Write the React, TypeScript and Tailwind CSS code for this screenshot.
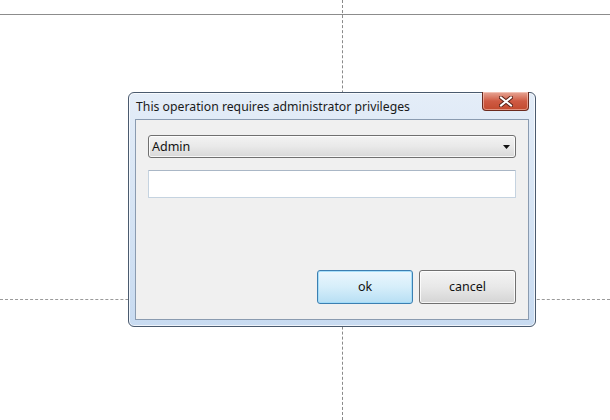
import React from "react";

export default function App() {
  const font = { fontFamily: '"Noto Sans", "Open Sans", sans-serif' };
  return (
    <div className="relative w-[610px] h-[420px] bg-white overflow-hidden" style={font}>
      {/* canvas guide lines */}
      <div className="absolute left-0 top-[14px] w-[610px] h-0 border-t border-[#8c8c8c]" />
      <div className="absolute left-[342px] top-0 w-0 h-[420px] border-l border-dashed border-[#8a8a8a]" />
      <div className="absolute left-0 top-[299px] w-[610px] h-0 border-t border-dashed border-[#9a9a9a]" />

      {/* window */}
      <div className="absolute left-[128px] top-[92px] w-[408px] h-[235px] rounded-[6px] border border-[#4a5a6e] bg-gradient-to-b from-[#e4edf8] via-[#d6e4f4] to-[#c8dbf1] flex flex-col px-[6px] pb-[6px] shadow-[inset_0_0_0_1px_rgba(255,255,255,0.7)]">
        <div className="h-[26px] flex items-start justify-between">
          <div className="pt-[5px] pl-[1px] text-[12.25px] leading-[17px] text-[#1a1a1a]">
            This operation requires administrator privileges
          </div>
          <div className="mt-[-1px] w-[47px] h-[19px] rounded-b-[4px] border border-[#6b2a1e] border-t-0 bg-gradient-to-b from-[#e6a696] via-[#cf5a43] to-[#c24a2e] flex items-center justify-center shadow-[inset_0_0_0_1px_rgba(255,220,210,0.5)]">
            <svg width="14" height="11" viewBox="0 0 14 11">
              <path d="M2 1.5 L12 9.5 M12 1.5 L2 9.5" stroke="#5a2218" strokeWidth="4" strokeLinecap="square" />
              <path d="M2 1.5 L12 9.5 M12 1.5 L2 9.5" stroke="#ffffff" strokeWidth="2" strokeLinecap="square" />
            </svg>
          </div>
        </div>
        <div className="flex-1 border border-[#8a9bb0] bg-[#f0f0f0] flex flex-col pt-[15px] pl-[12px] pr-[12px]">
          <div className="h-[23px] w-[368px] rounded-[3px] border border-[#707070] bg-gradient-to-b from-[#f3f3f3] via-[#e9e9e9] to-[#d8d8d8] flex items-center justify-between pl-[3px] pr-[5px] shadow-[inset_0_0_0_1px_rgba(255,255,255,0.8)]">
            <span className="text-[12.5px] text-[#111] leading-none pt-[1px]">Admin</span>
            <svg width="7" height="4" viewBox="0 0 7 4">
              <path d="M0 0 H7 L3.5 4 Z" fill="#111" />
            </svg>
          </div>
          <div className="mt-[12px] h-[28px] w-[368px] bg-white border border-[#c5d3e0] border-t-[#aab7c6] rounded-[1px]" />
          <div className="flex-1" />
          <div className="flex justify-end gap-[6px] pb-[15px]">
            <div className="w-[96px] h-[34px] rounded-[3px] border border-[#3c7fb1] bg-gradient-to-b from-[#ebf7fd] via-[#d6eefa] to-[#b7dff4] flex items-center justify-center text-[12.5px] text-[#111] pt-[1px] shadow-[inset_0_0_0_1px_rgba(160,220,250,0.9)]">
              ok
            </div>
            <div className="w-[97px] h-[34px] rounded-[3px] border border-[#707070] bg-gradient-to-b from-[#f4f4f4] via-[#e8e8e8] to-[#d4d4d4] flex items-center justify-center text-[12.5px] text-[#111] pt-[1px] shadow-[inset_0_0_0_1px_rgba(255,255,255,0.8)]">
              cancel
            </div>
          </div>
        </div>
      </div>
    </div>
  );
}
